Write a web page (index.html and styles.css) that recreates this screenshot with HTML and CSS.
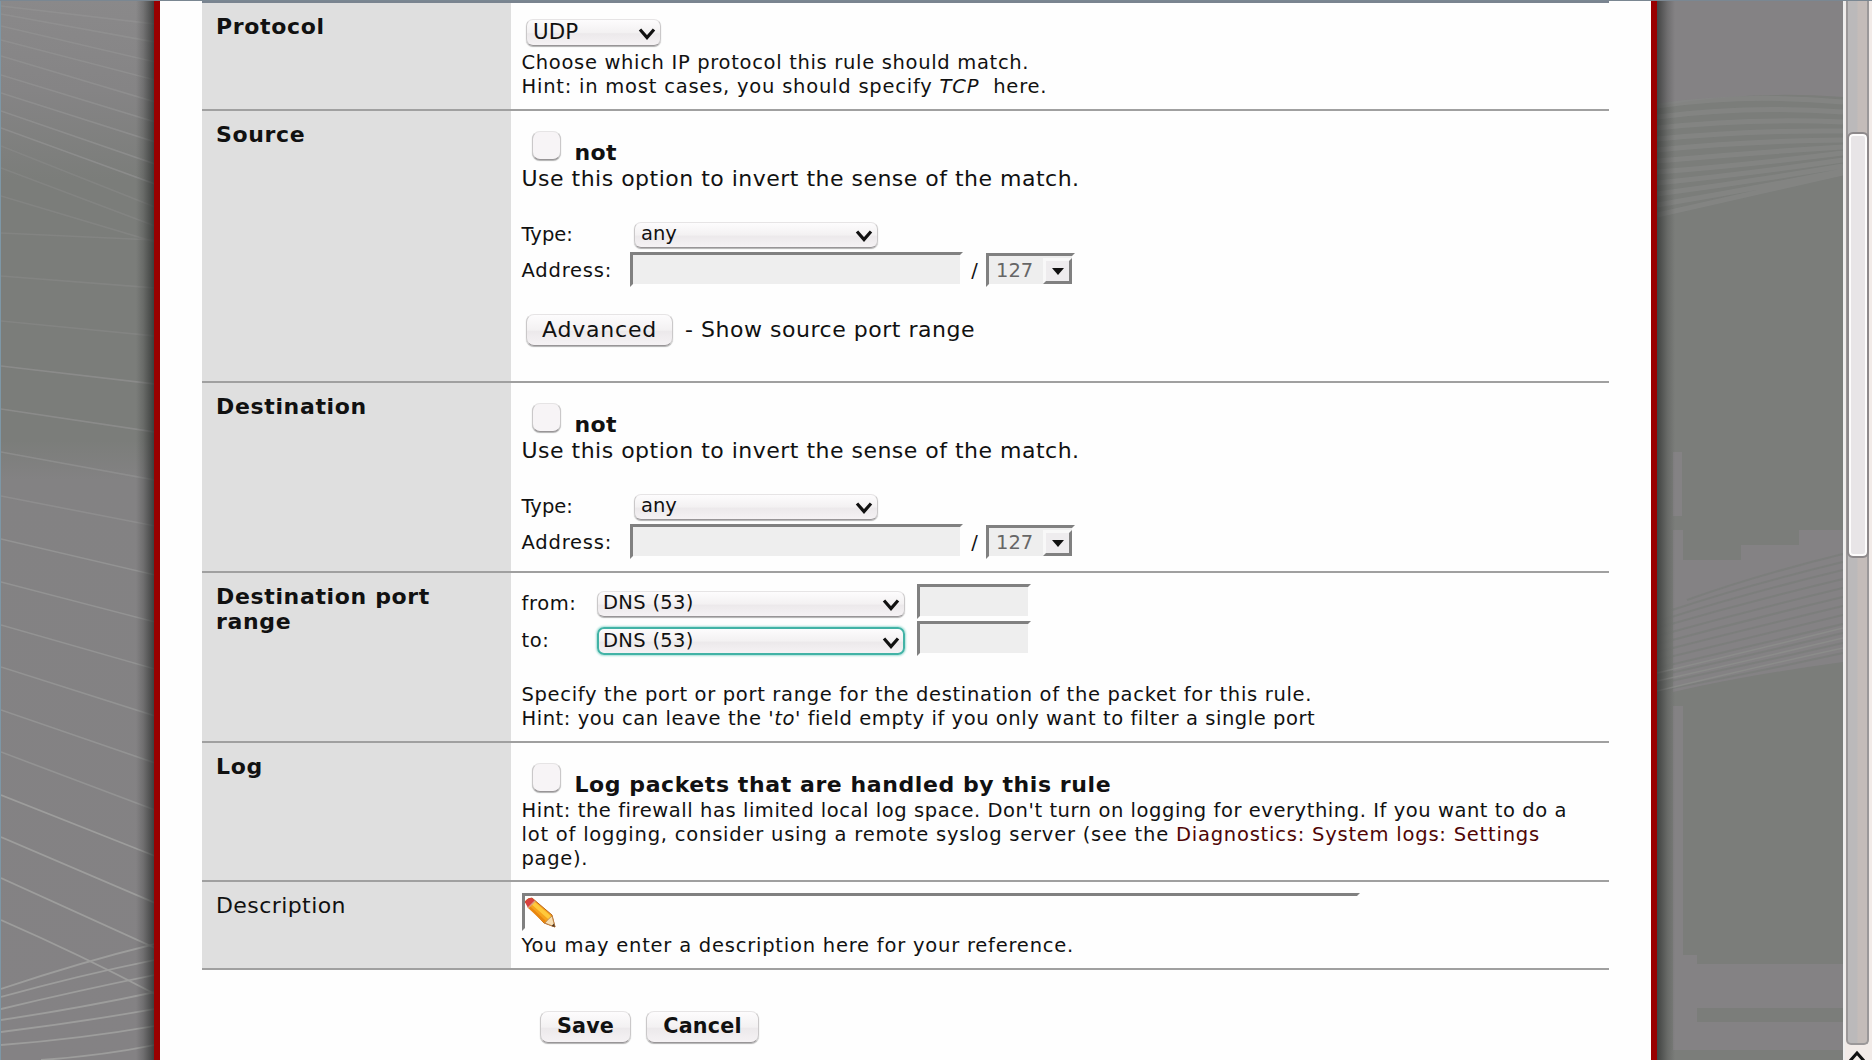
FILE: index.html
```
<!DOCTYPE html>
<html lang="en">
<head>
<meta charset="utf-8">
<title>Firewall: Rules: Edit</title>
<link rel="stylesheet" href="styles.css">
</head>
<body>
<svg class="defs" width="0" height="0" aria-hidden="true">
  <symbol id="chev" viewBox="0 0 18 12"><path d="M2 1.5 9 9.5 16 1.5" fill="none" stroke="#111" stroke-width="3.2"/></symbol>
</svg>
<div class="page">
  <div class="side side-left">
    <svg viewBox="0 0 154 1060" width="154" height="1060">
      <g fill="none" stroke="#939393" stroke-width="1.6">
        <path d="M0 6 154 24M0 14 154 42M0 26 154 62M0 40 154 80M0 56 154 102M0 75 154 122M0 93 154 142M0 111 154 164M0 128 154 184" opacity=".7"/>
        <path d="M0 146 154 207M0 168 154 226M0 196 154 242M0 233 154 240M0 276 154 288M0 321 154 336" opacity=".35"/>
        <path d="M0 366 154 384M0 409 154 432M0 452 154 480M0 496 154 526" opacity=".65"/>
        <path d="M0 539 154 575M0 582 154 622M0 625 154 669M0 667 154 716M0 710 154 763M0 752 154 810"/>
      </g>
      <g fill="none" stroke="#9d9d9c" stroke-width="1.8">
        <path d="M0 795 154 856M0 837 154 903M0 878 154 948M0 920Q80 955 154 994"/>
        <path d="M0 989Q80 962 154 944M0 997Q80 975 154 960M0 1009Q80 990 154 975M0 1020Q80 1008 154 992M0 1032Q80 1022 154 1009M0 1045Q80 1039 154 1026M40 1060Q100 1056 154 1045"/>
      </g>
    </svg>
  </div>
  <main class="panel">
    <form class="rules">
      <section class="row row-protocol">
        <h2 class="label">Protocol</h2>
        <div class="cell">
          <div class="select select-udp"><span>UDP</span><svg><use href="#chev"/></svg></div>
          <p class="small">Choose which IP protocol this rule should match.</p>
          <p class="small wide">Hint: in most cases, you should specify <i class="tcp">TCP</i> here.</p>
        </div>
      </section>
      <section class="row row-source">
        <h2 class="label">Source</h2>
        <div class="cell">
          <div class="check"><span class="box"></span><b>not</b></div>
          <p class="big">Use this option to invert the sense of the match.</p>
          <div class="field type"><label>Type:</label><div class="select"><span>any</span><svg><use href="#chev"/></svg></div></div>
          <div class="field address"><label>Address:</label><span class="input"></span><span class="slash">/</span><span class="input mask"><span>127</span><span class="drop"></span></span></div>
          <div class="advanced"><span class="button">Advanced</span><span>- Show source port range</span></div>
        </div>
      </section>
      <section class="row row-dest">
        <h2 class="label">Destination</h2>
        <div class="cell">
          <div class="check"><span class="box"></span><b>not</b></div>
          <p class="big">Use this option to invert the sense of the match.</p>
          <div class="field type"><label>Type:</label><div class="select"><span>any</span><svg><use href="#chev"/></svg></div></div>
          <div class="field address"><label>Address:</label><span class="input"></span><span class="slash">/</span><span class="input mask"><span>127</span><span class="drop"></span></span></div>
        </div>
      </section>
      <section class="row row-port">
        <h2 class="label">Destination port<br>range</h2>
        <div class="cell">
          <div class="field port"><label>from:</label><div class="select"><span>DNS (53)</span><svg><use href="#chev"/></svg></div><span class="input"></span></div>
          <div class="field port"><label>to:</label><div class="select focus"><span>DNS (53)</span><svg><use href="#chev"/></svg></div><span class="input"></span></div>
          <p class="small port-hint">Specify the port or port range for the destination of the packet for this rule.</p>
          <p class="small tight">Hint: you can leave the <i>'to'</i> field empty if you only want to filter a single port</p>
        </div>
      </section>
      <section class="row row-log">
        <h2 class="label">Log</h2>
        <div class="cell">
          <div class="check"><span class="box"></span><b>Log packets that are handled by this rule</b></div>
          <p class="small tight">Hint: the firewall has limited local log space. Don't turn on logging for everything. If you want to do a</p>
          <p class="small wide">lot of logging, consider using a remote syslog server (see the <a>Diagnostics: System logs: Settings</a></p>
          <p class="small">page).</p>
        </div>
      </section>
      <section class="row row-desc">
        <h2 class="label plain">Description</h2>
        <div class="cell">
          <div class="input description">
            <svg width="32" height="32" viewBox="0 0 32 32">
              <path d="M0 5Q2 1 7 1L27 18 30 30 19 26Z" fill="#f6a21c" stroke="#b9651b" stroke-width="1"/>
              <path d="M8 6 25 21" stroke="#ffc93c" stroke-width="4"/>
              <path d="M4 10 20 25" stroke="#e8860f" stroke-width="2.5"/>
              <path d="M0 5Q2 1 7 1L10 4 3 11Z" fill="#d8413f"/>
              <path d="M10 4 3 11" stroke="#d9a080" stroke-width="1.5"/>
              <path d="M27 19 30 30 20 26Q23 22 27 19Z" fill="#f7dfb4" stroke="#b98048" stroke-width=".8"/>
              <path d="M30 30 26.500 29 29 26.500Z" fill="#553a22"/>
            </svg>
          </div>
          <p class="small wide">You may enter a description here for your reference.</p>
        </div>
      </section>
      <div class="actions"><span class="button">Save</span><span class="button">Cancel</span></div>
    </form>
  </main>
  <div class="side side-right">
    <svg viewBox="0 0 186 1060" width="186" height="1060">
      <rect width="186" height="1060" fill="#7b7d7a"/>
      <path d="M0 0H186V97Q90 90 0 106ZM16 452h9v64h-9ZM16 530H26V560H84V545H142V530H186V662Q90 675 16 692ZM16 706H26V955H40V964H186V1008H40V1022H186V1050H16Z" fill="#848284"/>
      <g fill="none" stroke="#868786" stroke-width="5" opacity=".75">
        <path d="M0 106Q90 93 186 102M0 117Q90 105 186 112M0 128Q90 118 186 122M0 139Q90 130 186 131M0 150Q90 141 186 140M0 161Q90 153 186 147M0 172Q90 165 186 153M0 183Q90 174 186 160M0 194Q90 182 186 166M0 205Q90 190 186 171M0 215Q90 195 186 173"/>
      </g>
      <g fill="none" stroke="#7a7c79" stroke-width="2" opacity=".75">
        <path d="M30 600Q100 575 186 554M15 610Q90 585 186 562M5 620Q90 593 186 570M0 628Q90 602 186 579M0 636Q90 611 186 588M0 644Q90 620 186 597M0 652Q90 629 186 606M0 660Q90 638 186 615M0 668Q90 647 186 624M0 676Q90 656 186 633M0 684Q90 665 186 643M0 691Q90 674 186 653"/>
      </g>
      <path d="M0 691Q90 669 186 648M0 681Q90 661 186 638M0 673Q90 652 186 628" fill="none" stroke="#8b8c8a" stroke-width="1.500"/>
    </svg>
  </div>
  <div class="scrollbar">
    <div class="trough"><div class="thumb"></div></div>
    <svg width="16" height="11" viewBox="0 0 16 11"><path d="M1 11 8 3 15 11" fill="none" stroke="#111" stroke-width="3"/></svg>
  </div>
</div>
<div class="topline"></div>
</body>
</html>
```
FILE: styles.css
```
* { box-sizing: border-box; }
body {
  margin: 0;
  height: 1060px;
  overflow: hidden;
  background: #fff;
  color: #111;
  font-family: "DejaVu Sans", "Liberation Sans", sans-serif;
}
.defs { position: absolute; }
.page { display: flex; height: 1060px; }
h2, p { margin: 0; }

/* page backdrop */
.side { position: relative; overflow: hidden; flex: none; }
.side svg { display: block; }
.side::after { content: ""; position: absolute; top: 0; bottom: 0; width: 18px; }
.side-left {
  width: 154px;
  border-left: 1px solid #7d97a6;
  background: linear-gradient(#8a898a 0, #858485 90px, #7b7d7a 180px, #7b7d7a 440px, #838283 480px, #848284 100%);
}
.side-left::after { right: 0; background: linear-gradient(90deg, transparent, rgba(40,42,41,.22) 40%, rgba(40,42,41,.75)); }
.side-right { width: 186px; }
.side-right::after { left: 0; background: linear-gradient(270deg, transparent, rgba(40,42,41,.22) 40%, rgba(40,42,41,.7)); }
.topline { position: absolute; left: 0; top: 0; width: 1872px; height: 1px; background: #7a8792; }

.panel {
  width: 1503px;
  flex: none;
  padding: 0 42px;
  border: solid #990000;
  border-width: 0 6px;
  background: #fefefe;
}

/* form table */
.row {
  display: grid;
  grid-template-columns: 309px 1fr;
  border-bottom: 2px solid #a0a0a0;
}
.label {
  padding: 11px 0 0 14px;
  background: #dfdfdf;
  font-size: 22px;
  line-height: 26px;
  letter-spacing: .65px;
}
.plain { font-weight: normal; letter-spacing: .42px; }
.cell { padding: 20px 0 0 10.5px; }
.row-protocol { height: 111px; border-top: 3px solid #7a8490; }
.row-protocol .cell { padding-top: 16px; }
.row-source { height: 272px; }
.row-dest { height: 190px; }
.row-port { height: 170px; }
.row-port .label { line-height: 25px; }
.row-port .cell { padding-top: 11px; }
.row-log { height: 139px; }
.row-desc { height: 88px; }
.row-desc .cell { padding-top: 11px; }

.small, .big { padding-top: .6px; margin-bottom: -.6px; white-space: nowrap; }
.small { font-size: 19.5px; line-height: 24px; letter-spacing: .68px; }
.small.tight { letter-spacing: .56px; }
.small.wide { letter-spacing: .78px; }
.tcp { margin-right: 7px; }
.small a { color: #4f0505; }
.big { font-size: 22px; line-height: 26px; letter-spacing: .49px; }

.check { display: flex; height: 34px; padding-left: 10px; }
.check b { margin: 8.600px 0 0 14px; font-size: 22px; line-height: 26px; letter-spacing: .4px; }
.row-log .check { height: 35px; }
.row-log .check b { letter-spacing: .58px; }
.box, .select, .button {
  border: 1px solid #cac8c9;
  border-top-color: #e6e4e5;
  border-bottom-color: #989597;
  background: linear-gradient(#fdfcfd, #f3f1f2 50%, #ece9eb 55%, #f5f2f4);
  box-shadow: 0 1px 1px rgba(0,0,0,.3);
}
.box { width: 29px; height: 29px; border-radius: 8px; background: #f7f4f6; }
.select {
  display: flex;
  align-items: center;
  justify-content: space-between;
  height: 26px;
  padding: 0 4px 1px 6px;
  border-radius: 7px;
  font-size: 19.5px;
  line-height: 24px;
}
.select svg { width: 18px; height: 12px; margin-top: 3px; }
.select > span { margin-top: -1px; }
.select-udp { width: 135px; height: 27px; margin: 0 0 4px 4.500px; font-size: 21.4px; }
.select-udp > span { margin-top: 0; }
.focus { border: 2px solid #42b3a6; box-shadow: 0 0 2px 1px #a6e0d8; }

.field { display: flex; font-size: 19.5px; line-height: 24px; }
.type { height: 30px; margin-top: 31px; }
.type label { width: 112.500px; padding-top: .6px; }
.type .select { width: 244px; }
.address { height: 36px; }
.address label { width: 108.500px; padding-top: 6.600px; letter-spacing: .8px; }
.input {
  width: 333px;
  height: 35px;
  border: 3px solid;
  border-color: #808080 #fefefe #fefefe #808080;
  background: #eee;
}
.slash { padding-top: 6.600px; width: 23px; text-align: center; }
.mask {
  display: flex;
  justify-content: space-between;
  width: 89px;
  height: 34px;
  margin-top: 1px;
  padding: 2.600px 0 0 7px;
  color: #666;
}
.drop {
  display: grid;
  place-items: center;
  width: 29px;
  height: 26px;
  margin-top: -.6px;
  border: 3px solid;
  border-color: #f8f8f8 #808080 #808080 #f8f8f8;
  background: #eeecee;
}
.drop::before {
  content: "";
  border: 6px solid transparent;
  border-top: 7px solid #111;
  border-bottom: 0;
}
.advanced { display: flex; margin: 26px 0 0 4.500px; font-size: 22px; line-height: 26px; letter-spacing: .53px; }
.button {
  display: inline-block;
  width: 147px;
  height: 32px;
  margin-right: 12px;
  padding-top: 1.600px;
  border-radius: 8px;
  text-align: center;
  line-height: 26px;
  letter-spacing: .8px;
}
.advanced > :last-child { padding-top: 2.600px; }

.port { height: 37px; }
.port label { width: 75.500px; padding-top: 7.600px; letter-spacing: .6px; }
.port .select { width: 308px; margin-top: 7px; letter-spacing: .3px; padding-left: 5px; }
.port .focus { height: 28px; margin-top: 6px; padding: 0 3px 0 4px; }
.port .input { width: 114px; margin-left: 12px; }
.port-hint { margin-top: 24px; }

.description { width: 838px; height: 38px; margin: 0 0 2px .5px; background: #fefefe; }
.description svg { display: block; margin-top: 1px; }

.actions { display: flex; margin: 41px 0 0 338px; font-size: 20.7px; font-weight: bold; }
.actions .button { width: 91px; margin-right: 15px; padding-top: 1px; letter-spacing: .2px; }
.actions .button + .button { width: 113px; }

/* browser scrollbar */
.scrollbar {
  width: 29px;
  flex: none;
  padding: 0 3px 0 1px;
  border-left: 2px solid #eee;
  background: #f2ebe8;
  overflow: hidden;
}
.trough {
  width: 23px;
  height: 1045px;
  padding: 134px 0 0 .5px;
  border: solid #9b9899;
  border-width: 0 2px 2px;
  border-radius: 0 0 5px 5px;
  background: linear-gradient(90deg, #bbb9ba 45%, #c4bcb9 55%);
}
.thumb {
  width: 18px;
  height: 422px;
  border: 2px solid #fdfcfc;
  outline: 2px solid #8d898b;
  border-radius: 4px;
  background: #e8e5e7;
}
.scrollbar > svg { display: block; margin: 5px 0 0 3px; }
```
